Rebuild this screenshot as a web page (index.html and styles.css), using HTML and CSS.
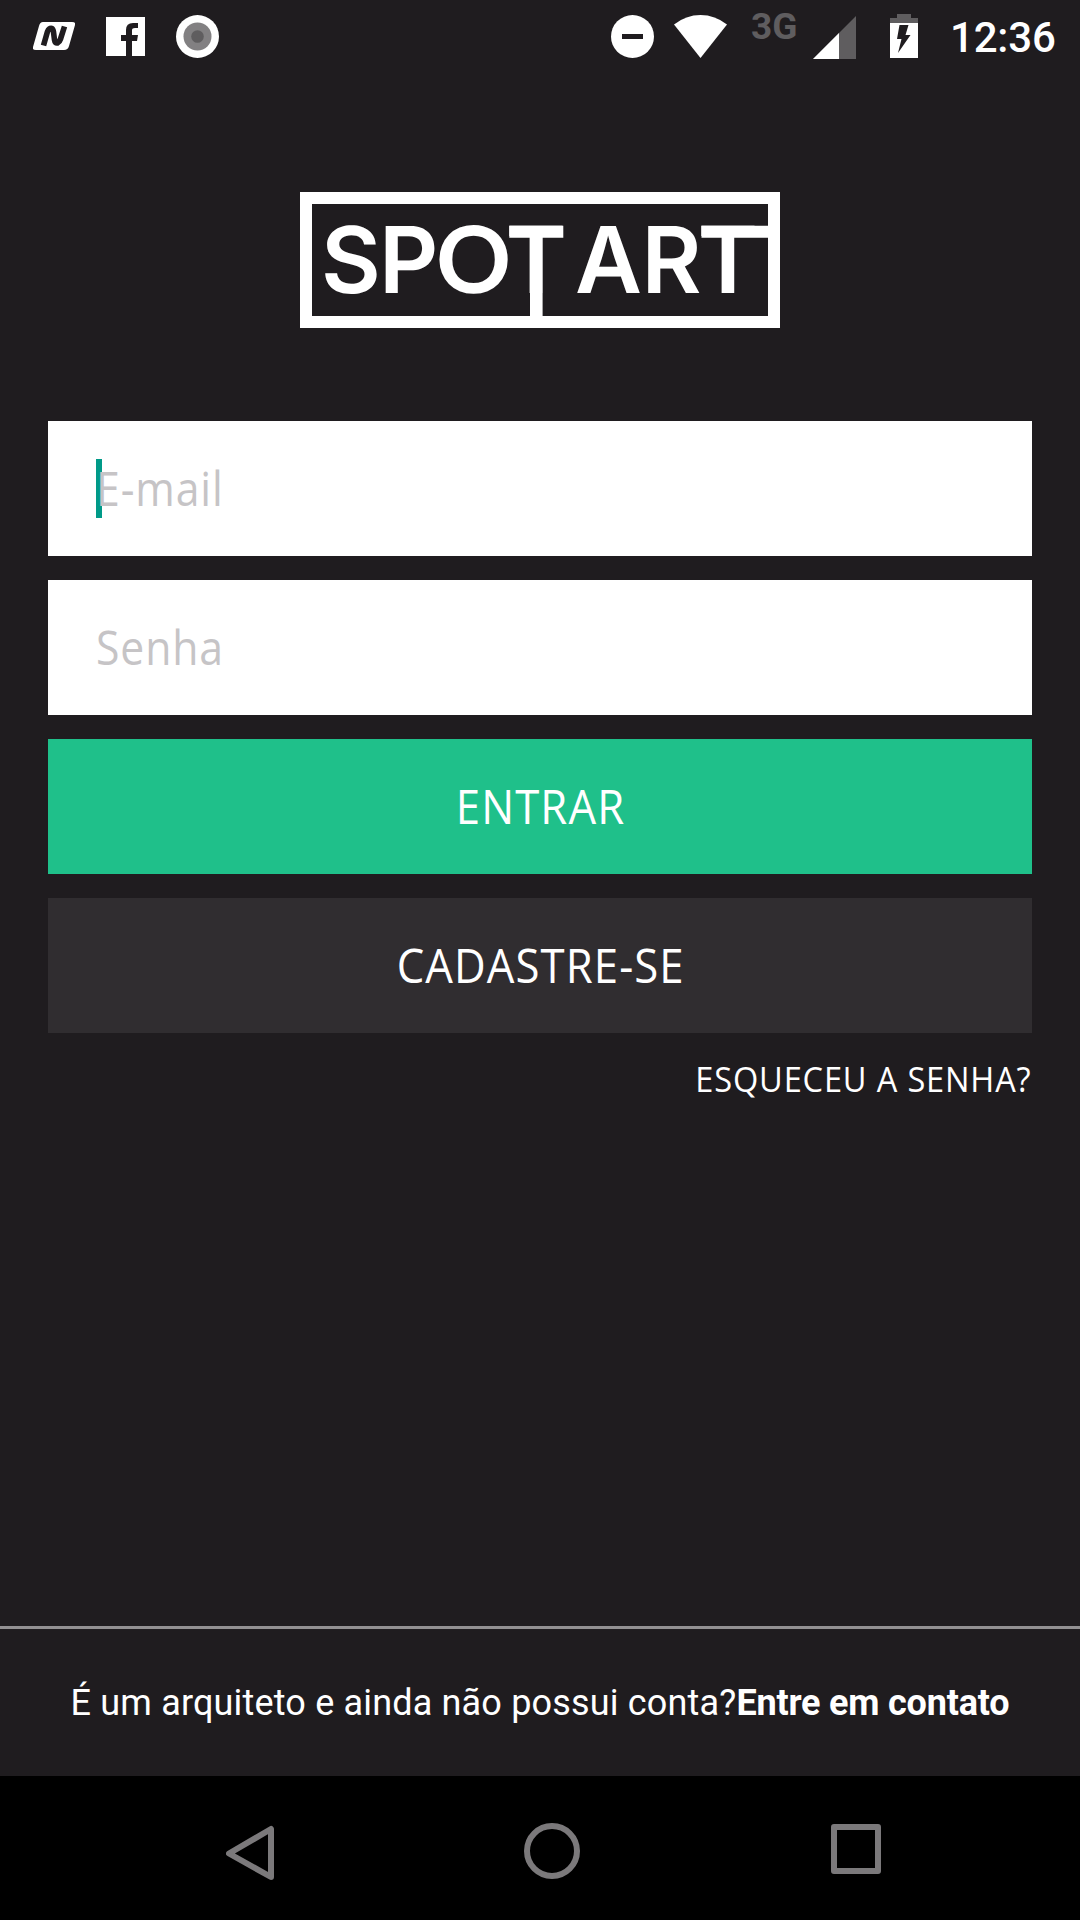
FILE: index.html
```html
<!DOCTYPE html>
<html lang="pt-BR">
<head>
<meta charset="utf-8">
<title>Spot Art</title>
<link rel="stylesheet" href="styles.css">
</head>
<body>
<div class="screen">
  <header class="status">
    <svg class="ic-n" width="42" height="28" viewBox="0 0 42 28"><path fill="#fff" d="M10 0H39Q43 0 42 3L36 24Q35 28 31 28H3Q-1 28 0 25L6 4Q7 0 10 0Z"/><path fill="none" stroke="#1f1c1f" stroke-width="5.600" stroke-linejoin="round" d="M10.500 23.500L14.500 9.500Q16 6 19 6.500Q20 7 20.500 10L21.500 18Q22 21.500 24.500 21Q26.500 20 27.500 17L31.500 4.500"/></svg>
    <svg class="ic-f" width="39" height="39" viewBox="0 0 39 39"><path fill="#fff" d="M0 0H39V39H26V24H31L32 18H26V13Q26 11 29 11H32V6H27Q20 6 20 13V18H15V24H20V39H0Z"/></svg>
    <svg class="ic-rec" width="43" height="43" viewBox="0 0 43 43"><circle cx="21.500" cy="21.500" r="21.500" fill="#fff"/><circle cx="21.500" cy="21.500" r="14" fill="#828082"/><circle cx="21.500" cy="21.500" r="6.300" fill="#5f5d5f"/></svg>
    <span class="spacer"></span>
    <svg class="ic-dnd" width="43" height="43" viewBox="0 0 43 43"><circle cx="21.500" cy="21.500" r="21.500" fill="#fff"/><path fill="#1f1c1f" d="M11 19h21v5H11z"/></svg>
    <svg class="ic-wifi" width="53" height="43" viewBox="0 0 53 43"><path fill="#fff" d="M0 9.500Q12 0 26.500 0T53 9.500L26.500 43Z"/></svg>
    <span class="net">3G</span>
    <svg class="ic-sig" width="43" height="43" viewBox="0 0 43 43"><path fill="#5f5d5f" d="M43 0V43H0Z"/><path fill="#fff" d="M26 17V43H0Z"/></svg>
    <svg class="ic-bat" width="28" height="44" viewBox="0 0 28 44"><path fill="#5f5d5f" d="M7 0H21V4H28V9H0V4H7Z"/><path fill="#fff" d="M0 9H28V44H0Z"/><path fill="#1f1c1f" d="M9.500 11H18.500L15.500 21H20.500L8 39L11.500 25H7Z"/></svg>
    <time class="clock">12:36</time>
  </header>

  <main class="login">
    <svg class="logo" width="480" height="136" viewBox="0 0 480 136" role="img" aria-label="Spot Art">
      <path class="frame" d="M6 6H474V130H6Z"/>
      <g class="mark">
        <text class="straight" x="21" y="100.700">S</text>
        <text class="straight" x="79" y="100.700">P</text>
        <text x="136" y="101">O</text>
        <text x="208" y="101">T</text>
        <text class="straight" x="275" y="100.700">A</text>
        <text class="straight" x="341.500" y="100.700">R</text>
        <text x="400" y="101">T</text>
      </g>
      <path fill="#fff" d="M209.300 33.700H263.300V45.700H242.600V125H230V45.700H209.300Z M401.500 33.700H470V45.700H401.500Z"/>
    </svg>
    <form class="form">
      <div class="field"><i class="caret"></i><span class="label">E-mail</span></div>
      <div class="field"><span class="label">Senha</span></div>
      <div class="btn primary"><span class="label">ENTRAR</span></div>
      <div class="btn secondary"><span class="label">CADASTRE-SE</span></div>
    </form>
    <a class="forgot">ESQUECEU A SENHA?</a>
  </main>

  <footer class="contact"><span class="ask">É um arquiteto e ainda não possui conta?</span><b>Entre em contato</b></footer>

  <nav class="nav">
    <svg class="back" width="48" height="56" viewBox="0 0 48 56"><path d="M45 4V52L3 28.500Z"/></svg>
    <svg class="home" width="56" height="56" viewBox="0 0 56 56"><circle cx="28" cy="28" r="25"/></svg>
    <svg class="recent" width="50" height="50" viewBox="0 0 50 50"><path d="M3 3H47V47H3Z"/></svg>
  </nav>
</div>
</body>
</html>
```
FILE: styles.css
```css
* { box-sizing: border-box; }
body { margin: 0; background: #1f1c1f; }
.screen {
  width: 1080px; height: 1920px;
  display: flex; flex-direction: column;
  background: #1f1c1f; color: #fff;
  font-family: Roboto, sans-serif;
}
svg { display: block; flex: none; }

.status { height: 72px; padding: 0 26px 0 33px; display: flex; align-items: center; }
.spacer { flex: 1; }
.ic-f { margin-left: 31px; }
.ic-rec { margin-left: 31px; }
.ic-wifi { margin: 0 24px 0 20px; }
.net { width: 45px; margin-bottom: 18px; font-size: 37px; line-height: 40px; font-weight: 700; color: #5f5d5f; }
.ic-sig { margin: 3px 34px 0 17px; }
.clock { width: 104px; margin-left: 32px; padding-top: 4px; font-size: 42px; font-weight: 500; line-height: 48px; letter-spacing: -.2px; }

.login { flex: 1; padding: 120px 48px 0; display: flex; flex-direction: column; }
.logo { align-self: center; }
.frame { fill: none; stroke: #fff; stroke-width: 12; }
.mark { fill: #fff; font: 700 93px Lato, sans-serif; text-rendering: geometricPrecision; }
.straight { font: 600 92px Inter, sans-serif; }

.form { margin-top: 93px; display: flex; flex-direction: column; gap: 24px; font: 400 48px "Open Sans", "Noto Sans", sans-serif; }
.field, .btn { height: 135px; padding-bottom: 2px; display: flex; align-items: center; }
.field { position: relative; padding-left: 48px; background: #fff; color: #c6c4c6; }
.btn { justify-content: center; }
.primary { background: #1fc08a; }
.secondary { background: #302d30; }
.caret { position: absolute; left: 48px; top: 38px; width: 6px; height: 59px; background: #009a88; }
.label { letter-spacing: 1.2px; transform: translateX(.5px) scaleX(.91); }
.field .label { position: relative; letter-spacing: 1px; transform: scaleX(.89); transform-origin: left; }
.forgot { margin-top: 22px; align-self: flex-end; font: 400 35px/48px "Open Sans", "Noto Sans", sans-serif; letter-spacing: .9px; transform: translateX(-1px) scaleX(.93); transform-origin: right; }

.contact { height: 150px; border-top: 3px solid #929092; display: flex; align-items: center; justify-content: center; font-size: 36px; white-space: nowrap; }
.ask { letter-spacing: .17px; }
.contact b { letter-spacing: -.2px; }

.nav { height: 144px; padding: 49px 199px 0 226px; display: flex; background: #000; fill: none; stroke: #7b797b; stroke-width: 6; stroke-linejoin: round; }
.home { margin: -2px 251px 0 250px; }
.recent { margin-top: -1px; }
```
